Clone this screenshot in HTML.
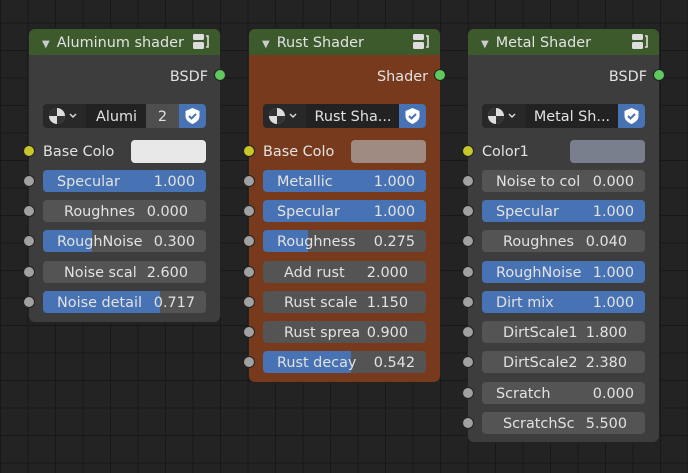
<!DOCTYPE html><html><head><style>
body{margin:0;width:688px;height:473px;overflow:hidden;background-color:#232323;
background-image:linear-gradient(90deg,#181818 1px,transparent 1px),linear-gradient(#181818 1px,transparent 1px);
background-size:27.5px 27.5px;background-position:0 -5px;font-family:"DejaVu Sans","Liberation Sans",sans-serif;font-size:14.4px;color:#e2e2e2;position:relative}
.node{position:absolute;width:191px;border-radius:6px;background:#3d3d3d;box-shadow:0 0 0 1px #222}
.hdr{position:absolute;left:0;top:0;right:0;height:26px;background:#3c5a2b;border-radius:6px 6px 0 0;line-height:28px}
.hdr .t{position:absolute;left:13px}
.hdr .tri{font-size:10px;margin-right:7px;color:#ccc}
.hi{position:absolute;right:9px;top:4px}
.out{position:absolute;right:12px;top:37px;height:20px;line-height:23px}
.sock{position:absolute;width:10px;height:10px;border-radius:50%;background:#a1a1a1;box-shadow:0 0 0 1px #222}
.w{position:absolute;left:14px;width:163px;height:22px;border-radius:4px;background:#545454;overflow:hidden;line-height:24px}
.w .f{position:absolute;left:0;top:0;bottom:0;background:#4772b3}
.w .l,.w .v{position:absolute;top:0}
.s .l{left:14px}.s .v{right:11px}
.n .l{left:21px}.n .v{right:18px}
.db{position:absolute;left:14px;top:75px;width:163px;height:24px;line-height:26px;border-radius:4px;overflow:hidden;background:#222}
.db div{position:absolute;top:0;bottom:0}
.lab{position:absolute;left:14px;top:112px;line-height:23px}
</style></head><body>

<!-- Node 1 -->
<div class="node" style="left:29px;top:29px;height:293px">
<div class="hdr"><span class="t"><span class="tri">▼</span>Aluminum shader</span>
<svg class="hi" width="20" height="18" viewBox="0 0 20 18"><rect x="2" y="1" width="11" height="6" rx="1.5" fill="#ddd"/><rect x="2" y="9" width="11" height="7" rx="1.5" fill="#ddd"/><path d="M15 3h2v11h-2" stroke="#ddd" stroke-width="1.6" fill="none"/></svg></div>
<div class="out">BSDF</div>
<div class="sock" style="right:-5px;top:41px;background:#5fc85f"></div>
<div class="db"><div style="left:0;width:43px;background:#282828"><svg width="43" height="24"><circle cx="14" cy="12" r="8" fill="#ddd"/><path d="M14 12V4A8 8 0 0 0 6 12Z M14 12H22A8 8 0 0 1 14 20Z" fill="#333"/><path d="M27 10l3 3 3-3" stroke="#ddd" stroke-width="1.4" fill="none"/></svg></div>
<div style="left:44px;width:59px;text-align:center">Alumi</div>
<div style="left:103px;width:33px;background:#4e4e4e;text-align:center">2</div>
<div style="left:136px;width:27px;background:#4772b3"><svg width="27" height="24"><path d="M13.5 4l7 3v5c0 4-3.5 6.5-7 8-3.5-1.5-7-4-7-8V7z" fill="#fff"/><path d="M10 12l2.5 2.5 4.5-4.5" stroke="#4772b3" stroke-width="2" fill="none"/></svg></div></div>
<div class="sock" style="left:-5px;top:117px;background:#c7c729"></div><div class="lab">Base Colo</div>
<div style="position:absolute;left:102px;top:111px;width:75px;height:23px;border-radius:4px;background:#e8e8e8"></div>
<div class="sock" style="left:-5px;top:147px"></div><div class="w s" style="top:141px"><div class="f" style="width:100%"></div><span class="l">Specular</span><span class="v">1.000</span></div>
<div class="sock" style="left:-5px;top:177px"></div><div class="w n" style="top:171px"><span class="l">Roughnes</span><span class="v">0.000</span></div>
<div class="sock" style="left:-5px;top:207px"></div><div class="w s" style="top:201px"><div class="f" style="width:49px"></div><span class="l">RoughNoise</span><span class="v">0.300</span></div>
<div class="sock" style="left:-5px;top:238px"></div><div class="w n" style="top:232px"><span class="l">Noise scal</span><span class="v">2.600</span></div>
<div class="sock" style="left:-5px;top:268px"></div><div class="w s" style="top:262px"><div class="f" style="width:117px"></div><span class="l">Noise detail</span><span class="v">0.717</span></div>
</div>

<!-- Node 2 -->
<div class="node" style="left:249px;top:29px;height:353px;background:#783a1c">
<div class="hdr"><span class="t"><span class="tri">▼</span>Rust Shader</span>
<svg class="hi" width="20" height="18" viewBox="0 0 20 18"><rect x="2" y="1" width="11" height="6" rx="1.5" fill="#ddd"/><rect x="2" y="9" width="11" height="7" rx="1.5" fill="#ddd"/><path d="M15 3h2v11h-2" stroke="#ddd" stroke-width="1.6" fill="none"/></svg></div>
<div class="out">Shader</div>
<div class="sock" style="right:-5px;top:41px;background:#5fc85f"></div>
<div class="db"><div style="left:0;width:43px;background:#282828"><svg width="43" height="24"><circle cx="14" cy="12" r="8" fill="#ddd"/><path d="M14 12V4A8 8 0 0 0 6 12Z M14 12H22A8 8 0 0 1 14 20Z" fill="#333"/><path d="M27 10l3 3 3-3" stroke="#ddd" stroke-width="1.4" fill="none"/></svg></div>
<div style="left:44px;width:92px;text-align:center">Rust Sha...</div>
<div style="left:136px;width:27px;background:#4772b3"><svg width="27" height="24"><path d="M13.5 4l7 3v5c0 4-3.5 6.5-7 8-3.5-1.5-7-4-7-8V7z" fill="#fff"/><path d="M10 12l2.5 2.5 4.5-4.5" stroke="#4772b3" stroke-width="2" fill="none"/></svg></div></div>
<div class="sock" style="left:-5px;top:117px;background:#c7c729"></div><div class="lab">Base Colo</div>
<div style="position:absolute;left:102px;top:111px;width:75px;height:23px;border-radius:4px;background:#a08b82"></div>
<div class="sock" style="left:-5px;top:147px"></div><div class="w s" style="top:141px"><div class="f" style="width:100%"></div><span class="l">Metallic</span><span class="v">1.000</span></div>
<div class="sock" style="left:-5px;top:177px"></div><div class="w s" style="top:171px"><div class="f" style="width:100%"></div><span class="l">Specular</span><span class="v">1.000</span></div>
<div class="sock" style="left:-5px;top:207px"></div><div class="w s" style="top:201px"><div class="f" style="width:45px"></div><span class="l">Roughness</span><span class="v">0.275</span></div>
<div class="sock" style="left:-5px;top:238px"></div><div class="w n" style="top:232px"><span class="l">Add rust</span><span class="v">2.000</span></div>
<div class="sock" style="left:-5px;top:268px"></div><div class="w n" style="top:262px"><span class="l">Rust scale</span><span class="v">1.150</span></div>
<div class="sock" style="left:-5px;top:298px"></div><div class="w n" style="top:292px"><span class="l">Rust sprea</span><span class="v">0.900</span></div>
<div class="sock" style="left:-5px;top:328px"></div><div class="w s" style="top:322px"><div class="f" style="width:88px"></div><span class="l">Rust decay</span><span class="v">0.542</span></div>
</div>

<!-- Node 3 -->
<div class="node" style="left:468px;top:29px;height:413px">
<div class="hdr"><span class="t"><span class="tri">▼</span>Metal Shader</span>
<svg class="hi" width="20" height="18" viewBox="0 0 20 18"><rect x="2" y="1" width="11" height="6" rx="1.5" fill="#ddd"/><rect x="2" y="9" width="11" height="7" rx="1.5" fill="#ddd"/><path d="M15 3h2v11h-2" stroke="#ddd" stroke-width="1.6" fill="none"/></svg></div>
<div class="out">BSDF</div>
<div class="sock" style="right:-5px;top:41px;background:#5fc85f"></div>
<div class="db"><div style="left:0;width:43px;background:#282828"><svg width="43" height="24"><circle cx="14" cy="12" r="8" fill="#ddd"/><path d="M14 12V4A8 8 0 0 0 6 12Z M14 12H22A8 8 0 0 1 14 20Z" fill="#333"/><path d="M27 10l3 3 3-3" stroke="#ddd" stroke-width="1.4" fill="none"/></svg></div>
<div style="left:44px;width:92px;text-align:center">Metal Sh...</div>
<div style="left:136px;width:27px;background:#4772b3"><svg width="27" height="24"><path d="M13.5 4l7 3v5c0 4-3.5 6.5-7 8-3.5-1.5-7-4-7-8V7z" fill="#fff"/><path d="M10 12l2.5 2.5 4.5-4.5" stroke="#4772b3" stroke-width="2" fill="none"/></svg></div></div>
<div class="sock" style="left:-5px;top:117px;background:#c7c729"></div><div class="lab">Color1</div>
<div style="position:absolute;left:102px;top:111px;width:75px;height:23px;border-radius:4px;background:#7a7f8d"></div>
<div class="sock" style="left:-5px;top:147px"></div><div class="w n" style="top:141px"><span class="l" style="left:14px">Noise to col</span><span class="v" style="right:11px">0.000</span></div>
<div class="sock" style="left:-5px;top:177px"></div><div class="w s" style="top:171px"><div class="f" style="width:100%"></div><span class="l">Specular</span><span class="v">1.000</span></div>
<div class="sock" style="left:-5px;top:207px"></div><div class="w n" style="top:201px"><span class="l">Roughnes</span><span class="v">0.040</span></div>
<div class="sock" style="left:-5px;top:238px"></div><div class="w s" style="top:232px"><div class="f" style="width:100%"></div><span class="l">RoughNoise</span><span class="v">1.000</span></div>
<div class="sock" style="left:-5px;top:268px"></div><div class="w s" style="top:262px"><div class="f" style="width:100%"></div><span class="l">Dirt mix</span><span class="v">1.000</span></div>
<div class="sock" style="left:-5px;top:298px"></div><div class="w n" style="top:292px"><span class="l">DirtScale1</span><span class="v">1.800</span></div>
<div class="sock" style="left:-5px;top:328px"></div><div class="w n" style="top:322px"><span class="l">DirtScale2</span><span class="v">2.380</span></div>
<div class="sock" style="left:-5px;top:359px"></div><div class="w s" style="top:353px"><span class="l">Scratch</span><span class="v">0.000</span></div>
<div class="sock" style="left:-5px;top:389px"></div><div class="w n" style="top:383px"><span class="l">ScratchSc</span><span class="v">5.500</span></div>
</div>
</body></html>
